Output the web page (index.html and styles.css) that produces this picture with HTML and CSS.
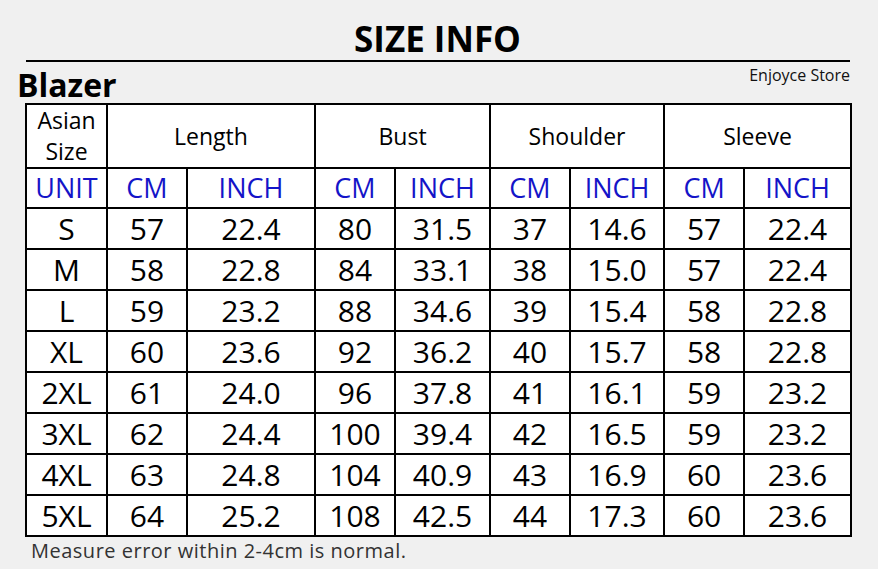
FILE: index.html
```html
<!DOCTYPE html>
<html>
<head>
<meta charset="utf-8">
<link rel="stylesheet" href="styles.css">
</head>
<body>
<div class="page">
  <h1 class="title">SIZE INFO</h1>
  <div class="rule"></div>
  <div class="subhead">
    <div class="product">Blazer</div>
    <div class="store">Enjoyce Store</div>
  </div>
  <table class="chart">
    <colgroup>
      <col class="c1"><col class="c2"><col class="c3"><col class="c2"><col class="c5"><col class="c2"><col class="c7"><col class="c2"><col class="c9">
    </colgroup>
    <tr class="head">
      <td class="asian">Asian<br>Size</td>
      <td colspan="2">Length</td>
      <td colspan="2">Bust</td>
      <td colspan="2">Shoulder</td>
      <td colspan="2">Sleeve</td>
    </tr>
    <tr class="unit">
      <td>UNIT</td><td>CM</td><td>INCH</td><td>CM</td><td>INCH</td><td>CM</td><td>INCH</td><td>CM</td><td>INCH</td>
    </tr>
    <tr class="row"><td>S</td><td>57</td><td>22.4</td><td>80</td><td>31.5</td><td>37</td><td>14.6</td><td>57</td><td>22.4</td></tr>
    <tr class="row"><td>M</td><td>58</td><td>22.8</td><td>84</td><td>33.1</td><td>38</td><td>15.0</td><td>57</td><td>22.4</td></tr>
    <tr class="row"><td>L</td><td>59</td><td>23.2</td><td>88</td><td>34.6</td><td>39</td><td>15.4</td><td>58</td><td>22.8</td></tr>
    <tr class="row"><td>XL</td><td>60</td><td>23.6</td><td>92</td><td>36.2</td><td>40</td><td>15.7</td><td>58</td><td>22.8</td></tr>
    <tr class="row"><td>2XL</td><td>61</td><td>24.0</td><td>96</td><td>37.8</td><td>41</td><td>16.1</td><td>59</td><td>23.2</td></tr>
    <tr class="row"><td>3XL</td><td>62</td><td>24.4</td><td>100</td><td>39.4</td><td>42</td><td>16.5</td><td>59</td><td>23.2</td></tr>
    <tr class="row"><td>4XL</td><td>63</td><td>24.8</td><td>104</td><td>40.9</td><td>43</td><td>16.9</td><td>60</td><td>23.6</td></tr>
    <tr class="row"><td>5XL</td><td>64</td><td>25.2</td><td>108</td><td>42.5</td><td>44</td><td>17.3</td><td>60</td><td>23.6</td></tr>
  </table>
  <div class="note">Measure error within 2-4cm is normal.</div>
</div>
</body>
</html>
```
FILE: styles.css
```css
html, body {
  margin: 0;
  padding: 0;
  background: #f0f0f0;
}
body {
  font-family: "Open Sans", "Noto Sans", sans-serif;
  color: #000;
  width: 878px;
  height: 569px;
  overflow: hidden;
}
.page {
  padding-left: 25px;
  width: 825px;
}
.title {
  margin: 0;
  padding-top: 17px;
  height: 43px;
  font-size: 35px;
  line-height: 43px;
  font-weight: 700;
  text-align: center;
  box-sizing: content-box;
}
.rule {
  height: 2px;
  background: #000;
  margin-left: 1px;
}
.subhead {
  display: flex;
  justify-content: space-between;
  height: 41px;
}
.product {
  margin-left: -8px;
  margin-top: 2px;
  font-size: 32px;
  font-weight: 700;
  line-height: 41px;
}
.store {
  font-size: 16px;
  line-height: 22px;
  margin-top: 2px;
  color: #111;
}
.chart {
  border-collapse: collapse;
  table-layout: fixed;
  width: 825px;
  background: #fff;
}
.c1 { width: 81px; }
.c2 { width: 80px; }
.c3 { width: 128px; }
.c5 { width: 95px; }
.c7 { width: 94px; }
.c9 { width: 107px; }
.chart td {
  border: 2px solid #000;
  padding: 0;
  text-align: center;
  vertical-align: middle;
  white-space: nowrap;
}
.head td {
  height: 62px;
  font-size: 23px;
  line-height: 31px;
}
.unit td {
  height: 38px;
  font-size: 27px;
  line-height: 38px;
  color: #1414c8;
}
.row td {
  height: 39px;
  font-size: 30px;
  line-height: 39px;
}
.note {
  margin-left: 6px;
  font-size: 20px;
  line-height: 28px;
  color: #333;
  letter-spacing: 0.5px;
}
```
